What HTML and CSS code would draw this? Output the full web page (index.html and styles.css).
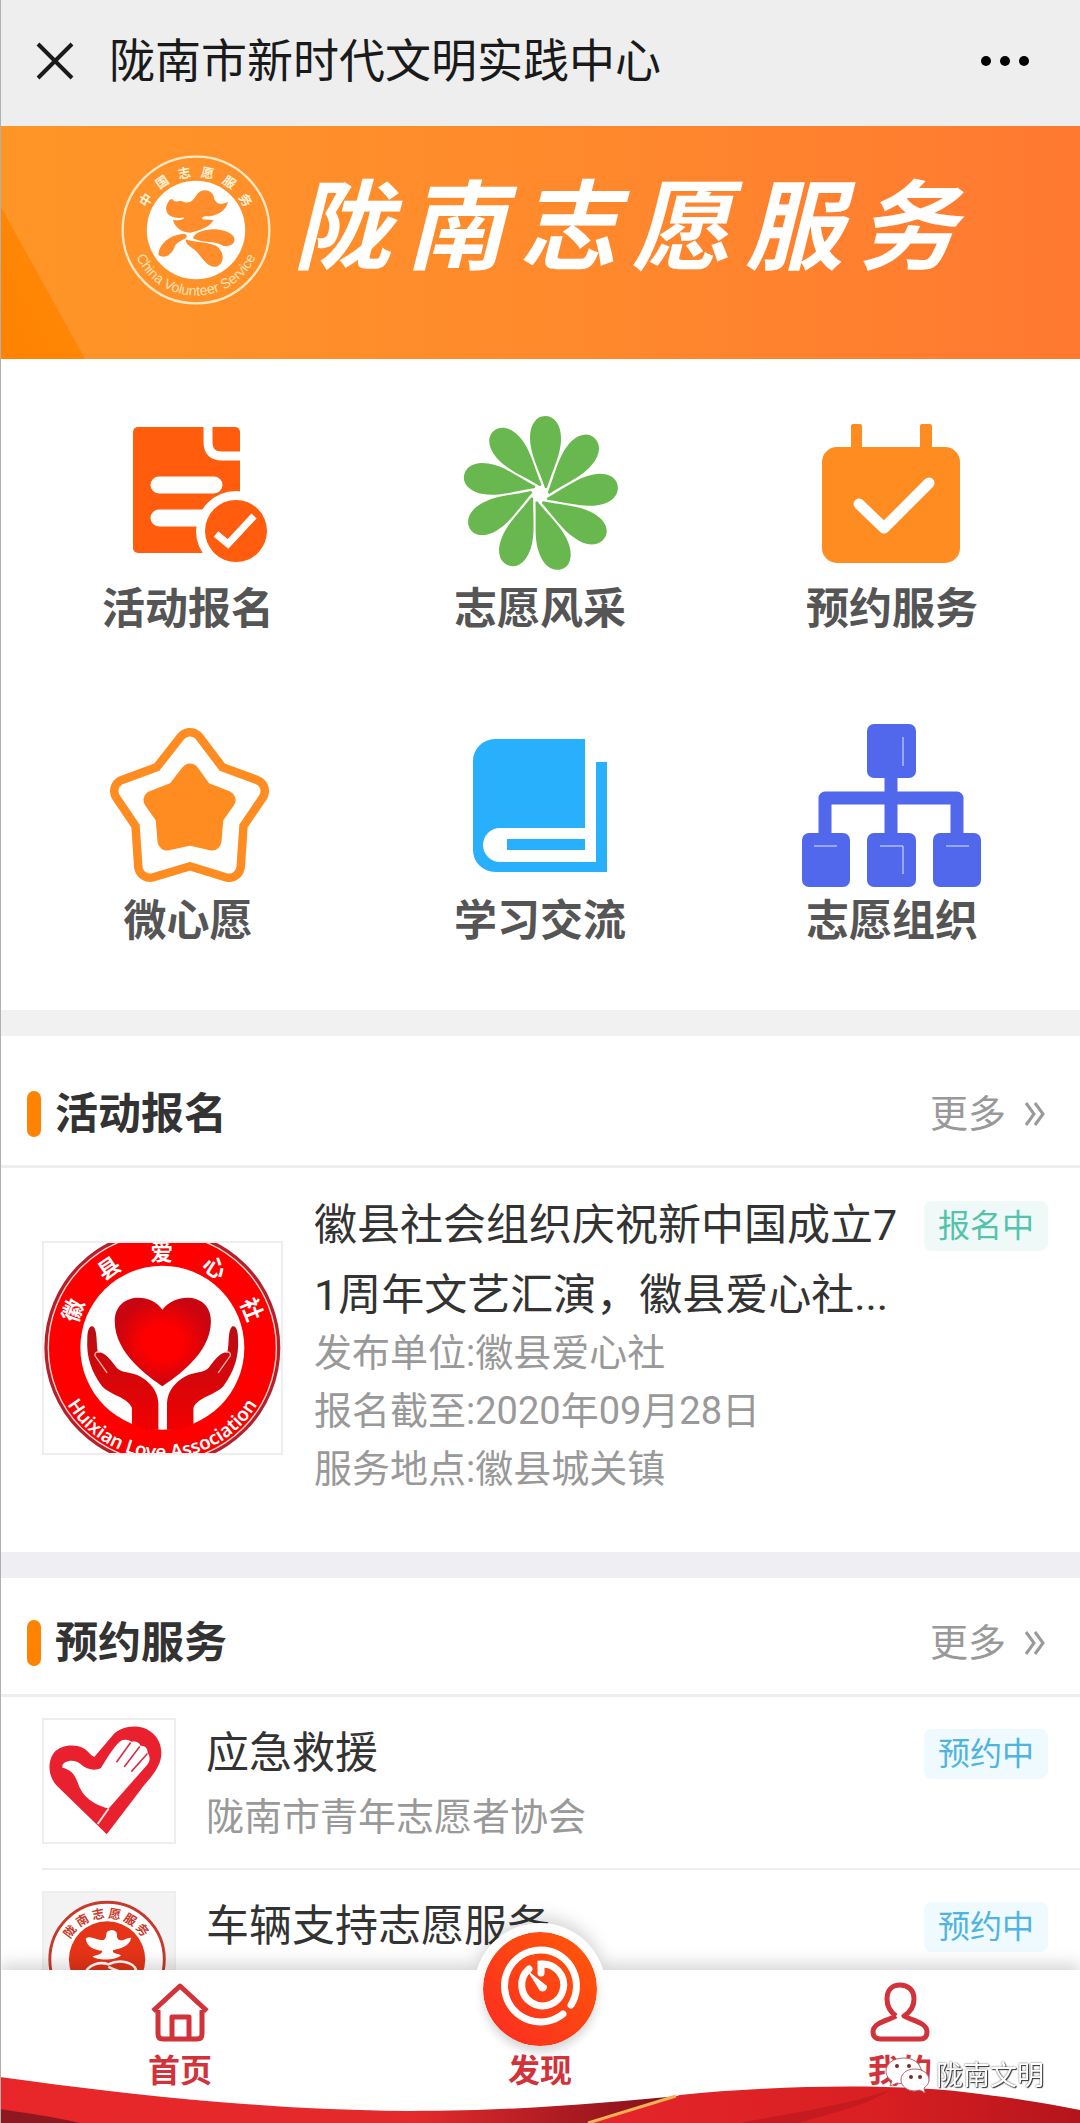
FILE: index.html
```
<!DOCTYPE html>
<html lang="zh-CN">
<head>
    <meta charset="UTF-8">
    <meta name="viewport" content="width=device-width, initial-scale=1.0">
    <title>陇南市新时代文明实践中心</title>
    <link rel="stylesheet" href="styles.css">
</head>
<body>
    <header class="topbar">
        <button class="icon-btn" type="button" aria-label="关闭">
            <svg width="38" height="38" viewBox="0 0 38 38"><path d="M2 2L36 36M36 2L2 36" stroke="#1a1a1a" stroke-width="4" fill="none"/></svg>
        </button>
        <h1>陇南市新时代文明实践中心</h1>
        <button class="icon-btn" type="button" aria-label="更多操作">
            <svg width="50" height="12" viewBox="0 0 50 12"><circle cx="6" cy="6" r="5"/><circle cx="25" cy="6" r="5"/><circle cx="44" cy="6" r="5"/></svg>
        </button>
    </header>

    <div class="banner">
        <svg class="emblem" viewBox="93 46 448 448">
            <defs><path id="ringText" d="M121 270A196 196 0 0 0 513 270"/></defs>
            <circle cx="317" cy="270" r="219" fill="none" stroke="#ffe9c4" stroke-width="7"/>
            <circle cx="317" cy="270" r="147" fill="#fff"/>
            <g fill="#ff8d2c">
                <path d="M228 200C236 178 244 172 250 182C258 190 266 180 275 184C298 194 308 182 318 166C334 142 368 150 371 175C378 196 395 194 413 186C405 215 375 230 345 229C332 231 332 239 345 239L369 240C358 262 330 270 300 278C270 276 255 262 248 240C262 242 282 241 281 232C240 240 225 220 228 200Z"/>
                <path d="M205 345C205 310 245 280 285 282C302 298 266 296 254 318C246 345 222 357 205 345Z"/>
                <path d="M308 295C315 265 400 255 430 290C438 310 420 320 400 318C370 300 340 312 308 295Z"/>
                <path d="M286 298C310 306 345 304 375 316C400 330 405 365 382 378C350 388 335 348 312 328C296 316 288 314 286 298Z"/>
            </g>
            <g class="ring-cn">
                <text transform="translate(165 179) rotate(-59)">中</text>
                <text transform="translate(214 125) rotate(-35)">国</text>
                <text transform="translate(282 98) rotate(-11)">志</text>
                <text transform="translate(352 98) rotate(11)">愿</text>
                <text transform="translate(418 125) rotate(35)">服</text>
                <text transform="translate(467 179) rotate(59)">务</text>
            </g>
            <text class="ring-en"><textPath href="#ringText" startOffset="50%">China Volunteer Service</textPath></text>
        </svg>
        <div class="banner-title"><span>陇</span><span>南</span><span>志</span><span>愿</span><span>服</span><span>务</span></div>
    </div>

    <nav class="menu">
        <a href="#">
            <svg viewBox="0 0 180 180">
                <rect x="35" y="23" width="107" height="126" rx="5" fill="#ff5c0d"/>
                <path d="M110 20V38Q110 52 124 52H146" stroke="#fff" stroke-width="9" fill="none"/>
                <path d="M61 81H116M61 114H120" stroke="#fff" stroke-width="17" stroke-linecap="round"/>
                <circle cx="138" cy="127" r="40" fill="#fff"/>
                <circle cx="138" cy="127" r="31" fill="#ff5c0d"/>
                <path d="M118 130L130 140L156 112" stroke="#fff" stroke-width="7" fill="none"/>
            </svg>
            <span>活动报名</span>
        </a>
        <a href="#">
            <svg viewBox="0 0 180 180" fill="#69b84f">
                <defs><path id="petal" d="M97 84C105 60 111 50 111 34C111 20 104 12 95 12C86 12 80 21 80 34C80 50 89 66 95 84Z"/></defs>
                <use href="#petal"/>
                <use href="#petal" transform="rotate(40 90 90)"/>
                <use href="#petal" transform="rotate(80 90 90)"/>
                <use href="#petal" transform="rotate(120 90 90)"/>
                <use href="#petal" transform="rotate(160 90 90)"/>
                <use href="#petal" transform="rotate(200 90 90)"/>
                <use href="#petal" transform="rotate(240 90 90)"/>
                <use href="#petal" transform="rotate(280 90 90)"/>
                <use href="#petal" transform="rotate(320 90 90)"/>
            </svg>
            <span>志愿风采</span>
        </a>
        <a href="#">
            <svg viewBox="0 0 180 180" fill="#ff8c21">
                <rect x="20" y="43" width="138" height="116" rx="15"/>
                <rect x="49" y="20" width="11" height="28" rx="2"/>
                <rect x="118" y="20" width="12" height="28" rx="2"/>
                <path d="M57 100L82 124L127 79" stroke="#fff" stroke-width="11" stroke-linecap="round" stroke-linejoin="round" fill="none"/>
            </svg>
            <span>预约服务</span>
        </a>
        <a href="#">
            <svg viewBox="0 0 180 180" stroke-linejoin="round">
                <defs><path id="star" d="M92 28L117 61L155 75L134 106L131 150L92 138L52 150L49 106L28 75L66 61Z"/></defs>
                <use href="#star" fill="#ff8c21" stroke="#ff8c21" stroke-width="32"/>
                <use href="#star" fill="#fff" stroke="#fff" stroke-width="15"/>
                <path d="M92 57L105 75L128 84L116 101L114 125L92 120L69 125L67 101L55 84L78 75Z" fill="#ff8c21" stroke="#ff8c21" stroke-width="19"/>
            </svg>
            <span>微心愿</span>
        </a>
        <a href="#">
            <svg viewBox="0 0 180 180" fill="#29b0fd">
                <path d="M45 23H135V112H50A17 17 0 0 0 50 146H146V46H157V156H45A22 22 0 0 1 23 134V45A22 22 0 0 1 45 23Z"/>
                <rect x="57" y="123" width="78" height="11"/>
            </svg>
            <span>学习交流</span>
        </a>
        <a href="#">
            <svg viewBox="0 0 180 180" fill="#5168ec">
                <rect x="65" y="8" width="49" height="54" rx="7"/>
                <rect x="0" y="117" width="48" height="54" rx="7"/>
                <rect x="65" y="117" width="49" height="54" rx="7"/>
                <rect x="131" y="117" width="48" height="54" rx="7"/>
                <path d="M89 60V120M23 120V82H155V120" fill="none" stroke="#5168ec" stroke-width="13" stroke-linejoin="round"/>
                <path d="M101 21V50M12 130H35M78 130H101V158M144 130H167" fill="none" stroke="#dfe4ff" stroke-width="1"/>
            </svg>
            <span>志愿组织</span>
        </a>
    </nav>

    <section class="panel panel-activity">
        <div class="panel-head">
            <h2>活动报名</h2>
            <a class="more" href="#">更多
                <svg width="22" height="24" viewBox="0 0 22 24"><path d="M2 1L10 12L2 23M11 1L19 12L11 23"/></svg>
            </a>
        </div>
        <article class="activity">
            <svg class="activity-pic" viewBox="39 63 717 636" preserveAspectRatio="xMidYMid slice">
                <defs>
                    <path id="loveText" d="M62 380A335 335 0 0 0 732 380"/>
                    <radialGradient id="heartFill"><stop offset="0.4" stop-color="#fe0000"/><stop offset="1" stop-color="#c80510"/></radialGradient>
                    <linearGradient id="handFill" x2="0" y2="1"><stop offset="0" stop-color="#b80d14"/><stop offset="1" stop-color="#f20000"/></linearGradient>
                    <path id="hand" d="M188 316C176 310 170 330 170 352C167 410 182 450 214 496C240 525 290 528 305 562V612L345 628H385V548C383 510 360 484 330 467C300 452 275 458 258 440C240 415 225 395 202 393C196 370 202 330 188 316Z"/>
                </defs>
                <circle cx="397" cy="380" r="357" fill="#b5202d"/>
                <circle cx="397" cy="380" r="345" fill="#fe0000" stroke="#ffd9cf" stroke-width="4"/>
                <circle cx="397" cy="380" r="248" fill="#fff"/>
                <path d="M397 497C360 470 253 400 253 300C253 215 360 210 397 265C440 210 544 215 544 300C544 400 435 470 397 497Z" fill="url(#heartFill)"/>
                <use href="#hand" fill="url(#handFill)"/>
                <use href="#hand" fill="url(#handFill)" transform="translate(796 0) scale(-1 1)"/>
                <path d="M230 456L193 404Q192 390 208 394M566 456L603 404Q604 390 588 394" fill="none" stroke="#ffb5a8" stroke-width="4"/>
                <g class="love-cn">
                    <text transform="translate(122 265) rotate(-70)">徽</text>
                    <text transform="translate(232 135) rotate(-34)">县</text>
                    <text transform="translate(395 84)">爱</text>
                    <text transform="translate(558 133) rotate(33)">心</text>
                    <text transform="translate(673 262) rotate(68)">社</text>
                </g>
                <text class="love-en"><textPath href="#loveText" startOffset="50%">Huixian Love Association</textPath></text>
            </svg>
            <div class="activity-info">
                <h3>徽县社会组织庆祝新中国成立71周年文艺汇演，徽县爱心社...</h3>
                <p>发布单位:徽县爱心社</p>
                <p>报名截至:2020年09月28日</p>
                <p>服务地点:徽县城关镇</p>
            </div>
            <span class="tag tag-green">报名中</span>
        </article>
    </section>

    <section class="panel">
        <div class="panel-head">
            <h2>预约服务</h2>
            <a class="more" href="#">更多
                <svg width="22" height="24" viewBox="0 0 22 24"><path d="M2 1L10 12L2 23M11 1L19 12L11 23"/></svg>
            </a>
        </div>
        <ul class="services">
            <li>
                <svg class="service-pic" viewBox="36 57 402 376">
                    <path d="M230 410L78 262C50 235 45 190 65 160C85 132 130 130 155 142C175 152 182 170 192 170L248 104C275 72 335 68 365 92C400 115 408 165 388 200C375 228 350 250 335 272Z" fill="#e9212f"/>
                    <path d="M93 196C100 182 130 176 148 192C170 212 195 214 212 205C228 180 250 140 272 122C285 113 303 118 306 124C320 120 333 128 334 136C348 134 358 146 356 156C366 172 364 184 354 196L236 330C205 322 165 305 146 265C135 238 130 212 93 204Z" fill="#fff"/>
                    <path d="M304 126L260 187M332 138L284 202M356 160L306 216" stroke="#d92f45" stroke-width="5"/>
                    <path d="M236 330L202 378" stroke="#ffe3df" stroke-width="6"/>
                </svg>
                <div class="service-info">
                    <h3>应急救援</h3>
                    <p>陇南市青年志愿者协会</p>
                </div>
                <span class="tag tag-blue">预约中</span>
            </li>
            <li>
                <svg class="service-pic gray" viewBox="36 572 402 376">
                    <circle cx="231" cy="777" r="177" fill="#fff" stroke="#c9392b" stroke-width="9"/>
                    <circle cx="231" cy="777" r="118" fill="#e53417"/>
                    <path d="M165 712C180 700 205 722 222 716C235 704 220 690 245 686C275 690 250 715 275 718C285 718 295 708 306 710C300 738 270 744 250 748C245 760 262 758 274 764C262 780 200 782 186 768C196 762 218 762 216 750C195 748 168 740 165 712Z" fill="#fff"/>
                    <path d="M160 830C170 785 215 785 235 792C270 775 315 785 322 812C300 830 260 812 235 800" fill="none" stroke="#fff" stroke-width="8"/>
                    <g class="seal-cn">
                        <text transform="translate(115 689) rotate(-53)">陇</text>
                        <text transform="translate(154 654) rotate(-32)">南</text>
                        <text transform="translate(203 635) rotate(-11)">志</text>
                        <text transform="translate(255 635) rotate(10)">愿</text>
                        <text transform="translate(304 652) rotate(31)">服</text>
                        <text transform="translate(342 684) rotate(52)">务</text>
                    </g>
                </svg>
                <div class="service-info">
                    <h3>车辆支持志愿服务</h3>
                </div>
                <span class="tag tag-blue">预约中</span>
            </li>
        </ul>
    </section>

    <nav class="tabbar">
        <svg class="wave" viewBox="0 0 1080 50" preserveAspectRatio="none">
            <defs>
                <linearGradient id="waveLeft"><stop offset="0" stop-color="#e8262a"/><stop offset="0.6" stop-color="#e42a2c"/><stop offset="1" stop-color="#7d0f18"/></linearGradient>
                <linearGradient id="waveRight"><stop offset="0" stop-color="#e5262a"/><stop offset="0.6" stop-color="#d81f22"/><stop offset="1" stop-color="#b3151c"/></linearGradient>
            </defs>
            <path d="M0 4C150 25 280 37 410 38C520 38 600 30 690 22L640 50H0Z" fill="url(#waveLeft)"/>
            <path d="M0 36C25 40 50 43 80 50H0Z" fill="#8f1720"/>
            <path d="M590 50L680 22C780 12 900 10 980 21C1020 26 1050 31 1080 37V50Z" fill="url(#waveRight)"/>
            <path d="M740 50C790 40 840 34 890 17C860 36 820 42 800 50Z" fill="#c41a20"/>
            <path d="M588 50L676 23" stroke="#f3b053" stroke-width="3"/>
        </svg>
        <a href="#">
            <svg width="62" height="60" viewBox="0 0 62 60"><path d="M4 29L31 4L58 29M9 28V52Q9 57 14 57H48Q53 57 53 52V28M23 57V35H40V57"/></svg>
            <span>首页</span>
        </a>
        <a href="#" class="tab-center">
            <span class="disc">
                <svg width="114" height="114" viewBox="0 0 114 114">
                    <defs><linearGradient id="disc" x1="0" y1="1" x2="1" y2="0"><stop offset="0" stop-color="#fb2a22"/><stop offset="1" stop-color="#ff5a08"/></linearGradient></defs>
                    <circle cx="57" cy="57" r="57" fill="url(#disc)"/>
                    <g fill="none" stroke="#fff" stroke-width="7" stroke-linecap="round">
                        <path d="M88 73A36 36 0 1 0 80 82"/>
                        <path d="M46 37A21 21 0 1 0 58 32V41"/>
                    </g>
                    <path d="M44 38L64 54Q64 61 57 59Z" fill="#fff"/>
                </svg>
            </span>
            <span>发现</span>
        </a>
        <a href="#">
            <svg width="62" height="60" viewBox="0 0 62 60"><path d="M27 34C20 29 18 22 18 17C18 7 24 3 31 3C38 3 45 7 45 17C45 22 43 29 35 34C41 38 58 40 58 50Q58 57 51 57H12Q4 57 4 50C4 40 21 38 27 34"/></svg>
            <span>我的</span>
        </a>
    </nav>

    <div class="watermark">
        <svg width="46" height="38" viewBox="0 0 46 38" fill="#fff" stroke="#b06a6a" stroke-width="1">
            <path d="M20 1C9 1 2 7 2 14C2 19 5 22 8 24L6 29L13 26C30 29 37 21 37 14C37 7 30 1 20 1Z"/>
            <path d="M31 12C22 12 17 17 17 23C17 29 23 34 31 34L36 33L41 36L40 31C43 29 45 26 45 23C45 17 39 12 31 12Z"/>
            <g fill="#7a2a30" stroke="none"><circle cx="13" cy="9" r="2"/><circle cx="25" cy="9" r="2"/><circle cx="27" cy="20" r="2"/><circle cx="36" cy="20" r="2"/></g>
        </svg>
        <span>陇南文明</span>
    </div>
</body>
</html>
```
FILE: styles.css
```
* {
    box-sizing: border-box;
}

body {
    margin: 0;
    padding-bottom: 72px;
    font-family: Roboto, "Noto Sans CJK SC", sans-serif;
    color: #333;
    background-color: #fff;
}

/* thin line down the left edge */
body::before {
    content: "";
    position: fixed;
    top: 0;
    bottom: 0;
    left: 0;
    width: 1px;
    background-color: #b0b0b0;
    z-index: 20;
}

h1, h2, h3, p, ul {
    margin: 0;
    padding: 0;
}

a {
    color: inherit;
    text-decoration: none;
}

svg {
    display: block;
    flex-shrink: 0;
}

.topbar {
    display: flex;
    align-items: center;
    height: 126px;
    padding: 0 50px 4px 36px;
    background-color: #eee;
}

.topbar h1 {
    flex: 1;
    margin-left: 35px;
    font-size: 46px;
    font-weight: 400;
    line-height: 50px;
    color: #1a1a1a;
}

.icon-btn {
    padding: 0;
    border: none;
    background: none;
    cursor: pointer;
}

.banner {
    display: flex;
    align-items: flex-start;
    gap: 22px;
    height: 233px;
    padding: 29px 124px 0 121px;
    background: linear-gradient(61deg, #ff8200 0, #ff8606 74px, transparent 75px), linear-gradient(90deg, #ff9527, #ff8a2c 50%, #ff7931);
}

.emblem {
    width: 150px;
    height: 150px;
}

.ring-cn text, .love-cn text, .seal-cn text {
    font-family: "Noto Sans CJK SC", sans-serif;
    font-weight: 700;
    text-anchor: middle;
    dominant-baseline: central;
}

.ring-cn {
    font-size: 38px;
    fill: #fff3dc;
}

.ring-en {
    font-family: "Liberation Sans", sans-serif;
    font-size: 42px;
    fill: #ffe3b5;
    text-anchor: middle;
}

.banner-title {
    flex: 1;
    display: flex;
    justify-content: space-between;
    font-size: 98px;
    font-style: italic;
    font-weight: 700;
    line-height: 148px;
    color: #fff;
}

.menu {
    display: grid;
    grid-template-columns: repeat(3, 1fr);
    padding: 45px 12px 62px;
}

.menu a {
    display: flex;
    flex-direction: column;
    align-items: center;
    height: 312px;
    font-size: 43px;
    font-weight: 700;
    line-height: 50px;
    color: #555;
}

.menu a:nth-child(n+4) {
    height: 232px;
}

.menu svg {
    width: 180px;
    height: 180px;
    overflow: visible;
}

.panel {
    border-top: 26px solid #eeeef3;
}

.panel-activity {
    padding-top: 13px;
    border-top-color: #f1f1f1;
}

.panel-head {
    display: flex;
    align-items: center;
    justify-content: space-between;
    height: 119px;
    padding: 14px 34px 0 27px;
    border-bottom: 3px solid #eee;
}

.panel-head h2 {
    display: flex;
    align-items: center;
    gap: 14px;
    font-size: 43px;
    font-weight: 700;
    line-height: 48px;
}

.panel-head h2::before {
    content: "";
    width: 14px;
    height: 46px;
    border-radius: 7px;
    background-color: #ff8200;
}

.more {
    display: flex;
    align-items: center;
    gap: 18px;
    font-size: 38px;
    line-height: 48px;
    color: #999;
}

.more path {
    fill: none;
    stroke: #999;
    stroke-width: 3;
}

.activity {
    display: flex;
    align-items: flex-start;
    height: 384px;
    padding: 22px 32px 0 42px;
}

.activity-pic {
    width: 241px;
    height: 214px;
    margin-top: 51px;
    border: 2px solid #eee;
}

.love-cn {
    font-size: 68px;
    fill: #fff;
}

.love-en {
    font-family: "Noto Sans", sans-serif;
    font-size: 57px;
    font-weight: 600;
    fill: #fff;
    text-anchor: middle;
}

.activity-info {
    flex: 1;
    margin-left: 31px;
}

.activity h3 {
    margin-bottom: -6px;
    font-size: 43px;
    font-weight: 400;
    line-height: 70px;
    word-break: break-all;
}

.activity p, .services p {
    font-size: 38px;
    line-height: 58px;
    color: #999;
}

.tag {
    flex-shrink: 0;
    margin: 11px 0 0 16px;
    padding: 0 14px;
    border-radius: 8px;
    font-size: 32px;
    line-height: 50px;
}

.tag-green {
    color: #55c3ac;
    background-color: #effaf8;
}

.tag-blue {
    color: #51b3e0;
    background-color: #eefafd;
}

.services {
    list-style: none;
}

.services li {
    display: flex;
    align-items: flex-start;
    height: 173px;
    margin-left: 42px;
    padding: 21px 32px 0 0;
    border-bottom: 2px solid #eee;
}

.services li:last-child {
    border-bottom: none;
}

.service-pic {
    width: 134px;
    height: 126px;
    border: 2px solid #eee;
}

.service-pic.gray {
    background-color: #f3f3f3;
}

.seal-cn {
    font-size: 38px;
    fill: #c9392b;
}

.service-info {
    flex: 1;
    margin-left: 30px;
}

.service-info h3 {
    font-size: 43px;
    font-weight: 400;
    line-height: 70px;
}

.tabbar {
    position: fixed;
    right: 0;
    bottom: 0;
    left: 0;
    display: flex;
    height: 153px;
    background-color: #fff;
    filter: drop-shadow(0 -6px 8px rgba(0, 0, 0, 0.16));
    z-index: 5;
}

.tabbar a {
    position: relative;
    flex: 1;
    display: flex;
    flex-direction: column;
    align-items: center;
    gap: 6px;
    padding-top: 12px;
    font-size: 32px;
    font-weight: 700;
    line-height: 46px;
    color: #d2323a;
}

.tabbar a > svg {
    fill: none;
    stroke: #d2323a;
    stroke-width: 5;
    stroke-linejoin: round;
}

.tabbar .tab-center {
    padding-top: 78px;
}

.disc {
    position: absolute;
    top: -47px;
    padding: 9px;
    border-radius: 50%;
    background-color: #fff;
}

.disc svg {
    border-radius: 50%;
    box-shadow: 0 6px 10px rgba(0, 0, 0, 0.16);
}

.wave {
    position: absolute;
    bottom: 0;
    left: 0;
    width: 100%;
    height: 50px;
}

.watermark {
    position: fixed;
    right: 36px;
    bottom: 28px;
    display: flex;
    align-items: center;
    gap: 6px;
    font-size: 27px;
    line-height: 38px;
    color: #fff;
    text-shadow: 1px 1px 1px #333, 0 0 2px #555;
    z-index: 10;
}
```
